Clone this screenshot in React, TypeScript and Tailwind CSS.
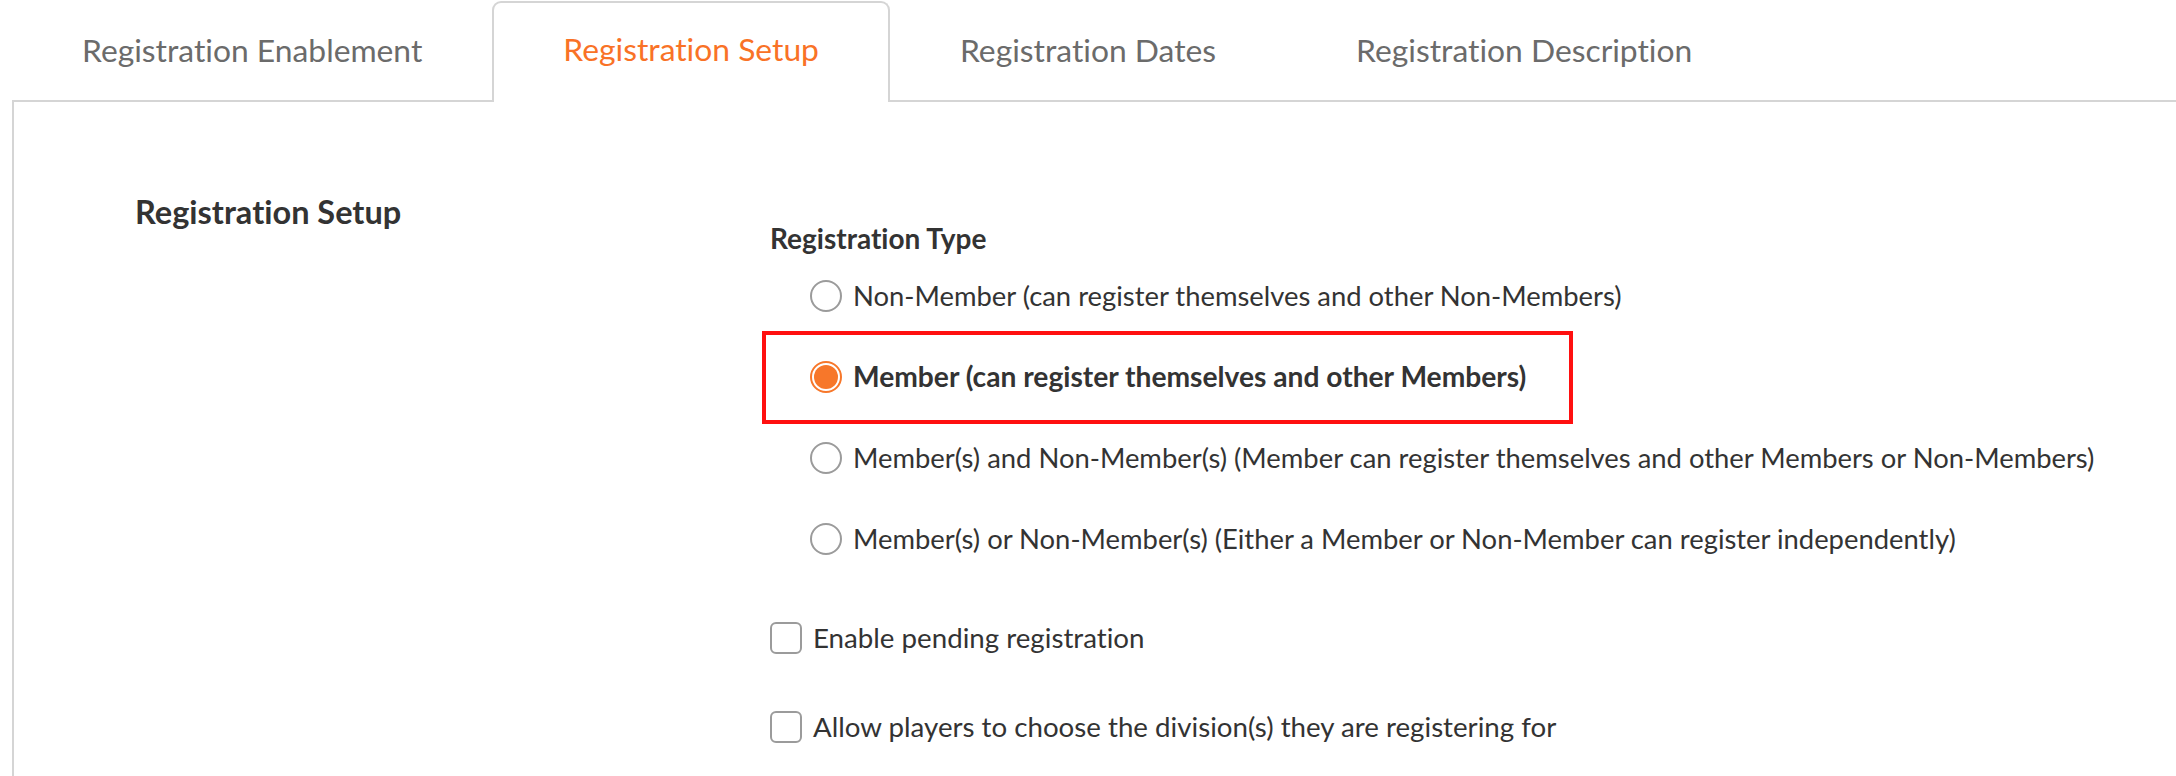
import React from "react";

const tabs = [
  "Registration Enablement",
  "Registration Setup",
  "Registration Dates",
  "Registration Description",
];

function Radio({ checked }: { checked?: boolean }) {
  if (checked) {
    return (
      <span className="flex h-[32px] w-[32px] shrink-0 items-center justify-center rounded-full border-2 border-[#f7772a] bg-white p-[2px]">
        <span className="block h-full w-full rounded-full bg-[#f7772a]" />
      </span>
    );
  }
  return <span className="block h-[32px] w-[32px] shrink-0 rounded-full border-2 border-[#9b9b9b] bg-white" />;
}

function Checkbox() {
  return <span className="block h-[32px] w-[32px] shrink-0 rounded-[6px] border-2 border-[#9b9b9b] bg-white" />;
}

export default function App() {
  return (
    <div className="h-[776px] w-[2176px] overflow-hidden bg-white font-['Lato',sans-serif] text-[#333333] [font-variant-ligatures:none]">
      {/* Tab bar */}
      <div className="ml-[12px] flex h-[102px] items-end border-b-2 border-[#d5d5d5]">
        {tabs.map((t, i) =>
          i === 1 ? (
            <div
              key={t}
              className="-mb-[2px] flex h-[101px] items-center rounded-t-[9px] border-2 border-b-0 border-[#d5d5d5] bg-white px-[69px] pb-[5px] text-[31.8px] text-[#f97226]"
            >
              {t}
            </div>
          ) : (
            <div
              key={t}
              className="flex h-[100px] items-center border-2 border-b-0 border-transparent px-[68px] text-[31.8px] text-[#6b6b6b]"
            >
              {t}
            </div>
          )
        )}
      </div>

      {/* Panel */}
      <div className="ml-[12px] grid h-[674px] grid-cols-[756px_1fr] border-l-2 border-[#d5d5d5] pt-[92px]">
        <div className="pl-[121px]">
          <h2 className="text-[32.5px] font-bold leading-[36px] text-[#333333]">Registration Setup</h2>
        </div>

        <div className="flex flex-col pt-[29px]">
          <div className="h-[30px] text-[28px] font-bold leading-[30px] text-[#333333]">Registration Type</div>

          <div className="mt-[2px] flex flex-col pl-[40px]">
            <label className="flex h-[81px] items-center gap-[11px] text-[27.4px]">
              <Radio />
              <span>Non-Member (can register themselves and other Non-Members)</span>
            </label>
            <label className="relative flex h-[81px] items-center gap-[11px] text-[28.2px] font-bold">
              <Radio checked />
              <span>Member (can register themselves and other Members)</span>
              <span className="pointer-events-none absolute left-[-48px] top-[-5px] h-[93px] w-[811px] border-4 border-[#ff1010]" />
            </label>
            <label className="flex h-[81px] items-center gap-[11px] text-[27.4px]">
              <Radio />
              <span>Member(s) and Non-Member(s) (Member can register themselves and other Members or Non-Members)</span>
            </label>
            <label className="flex h-[81px] items-center gap-[11px] text-[27.4px]">
              <Radio />
              <span>Member(s) or Non-Member(s) (Either a Member or Non-Member can register independently)</span>
            </label>
          </div>

          <label className="mt-[14px] flex h-[89px] items-center gap-[11px] text-[27.7px]">
            <Checkbox />
            <span>Enable pending registration</span>
          </label>
          <label className="flex h-[89px] items-center gap-[11px] text-[27.7px]">
            <Checkbox />
            <span>Allow players to choose the division(s) they are registering for</span>
          </label>
        </div>
      </div>
    </div>
  );
}
